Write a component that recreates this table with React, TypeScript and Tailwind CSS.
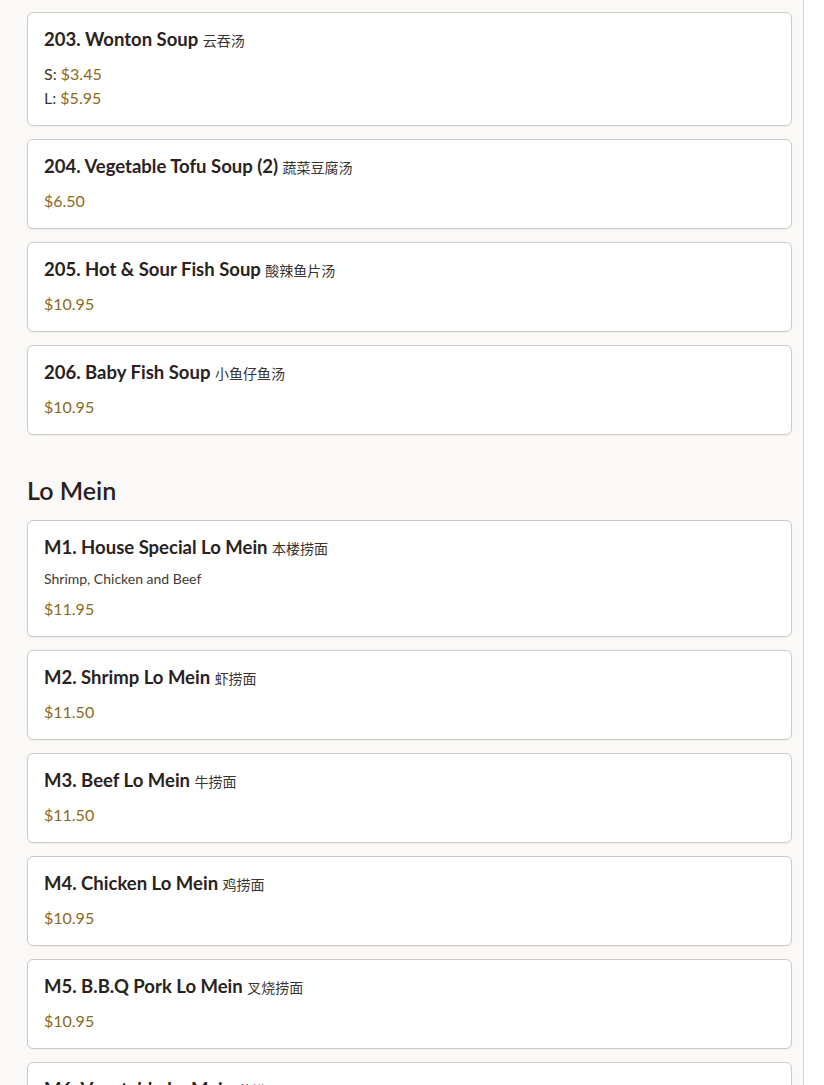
import React from 'react';

type Price = { label?: string; value: string };
type Item = { name: string; zh: string; desc?: string; prices: Price[] };

const soups: Item[] = [
  { name: '203. Wonton Soup', zh: '云吞汤', prices: [{ label: 'S', value: '$3.45' }, { label: 'L', value: '$5.95' }] },
  { name: '204. Vegetable Tofu Soup (2)', zh: '蔬菜豆腐汤', prices: [{ value: '$6.50' }] },
  { name: '205. Hot & Sour Fish Soup', zh: '酸辣鱼片汤', prices: [{ value: '$10.95' }] },
  { name: '206. Baby Fish Soup', zh: '小鱼仔鱼汤', prices: [{ value: '$10.95' }] },
];

const loMein: Item[] = [
  { name: 'M1. House Special Lo Mein', zh: '本楼捞面', desc: 'Shrimp, Chicken and Beef', prices: [{ value: '$11.95' }] },
  { name: 'M2. Shrimp Lo Mein', zh: '虾捞面', prices: [{ value: '$11.50' }] },
  { name: 'M3. Beef Lo Mein', zh: '牛捞面', prices: [{ value: '$11.50' }] },
  { name: 'M4. Chicken Lo Mein', zh: '鸡捞面', prices: [{ value: '$10.95' }] },
  { name: 'M5. B.B.Q Pork Lo Mein', zh: '叉烧捞面', prices: [{ value: '$10.95' }] },
  { name: 'M6. Vegetable Lo Mein', zh: '菜捞面', prices: [{ value: '$10.50' }] },
];

function MenuCard({ item }: { item: Item }) {
  return (
    <div className="bg-white border border-[#cfcac4] rounded-[6px] p-4 shadow-[0_1px_1px_rgba(0,0,0,0.04)]">
      <h3 className="h-[20px] text-[18.5px] leading-[20px] font-bold text-[#2a221e] whitespace-nowrap">
        {item.name} <span className="text-[14px] leading-[20px] font-normal text-[#3a332f]">{item.zh}</span>
      </h3>
      {item.desc && (
        <p className="mt-[13px] text-[14px] leading-[18px] text-[#3f3a36]">{item.desc}</p>
      )}
      <div className={`${item.desc ? 'mt-[10px]' : 'mt-[14px]'} flex flex-col gap-[2px]`}>
        {item.prices.map((p, i) => (
          <div key={i} className="text-[16px] leading-[22px] text-[#8b6a22]">
            {p.label && <span className="text-[#3f3a36]">{p.label}: </span>}
            {p.value}
          </div>
        ))}
      </div>
    </div>
  );
}

export default function App() {
  return (
    <div
      className="min-h-screen bg-white flex"
      style={{ fontFamily: 'Lato, "Noto Sans", "Noto Sans CJK SC", sans-serif' }}
    >
      <div className="w-[804px] bg-[#faf9f7] border-r border-[#d6d3cf] pl-[27px] pr-[11px] pt-[12px] pb-10">
        <div className="flex flex-col gap-[13px]">
          {soups.map((it) => (
            <MenuCard key={it.name} item={it} />
          ))}
        </div>

        <h2 className="mt-[39px] mb-[14px] text-[25px] leading-[32px] font-semibold text-[#2a221e]">Lo Mein</h2>

        <div className="flex flex-col gap-[13px]">
          {loMein.map((it) => (
            <MenuCard key={it.name} item={it} />
          ))}
        </div>
      </div>
    </div>
  );
}
